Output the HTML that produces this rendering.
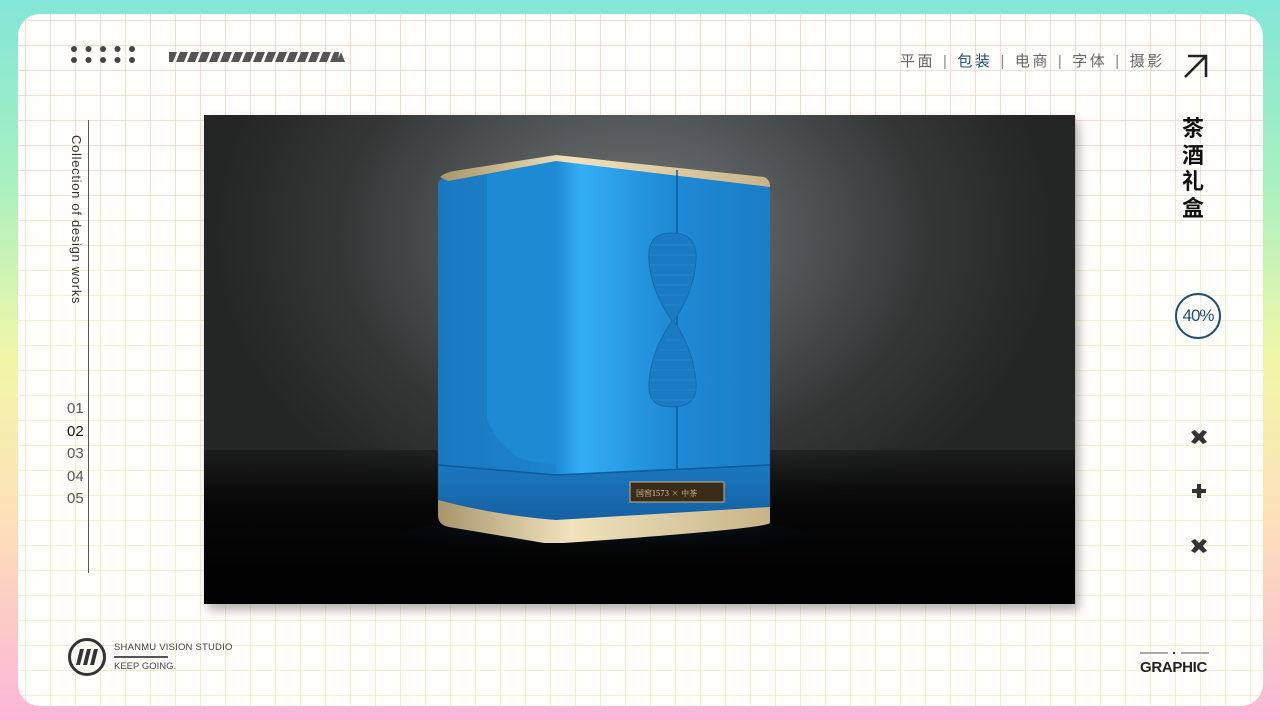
<!DOCTYPE html>
<html><head><meta charset="utf-8"><style>
*{margin:0;padding:0;box-sizing:border-box}
body{width:1280px;height:720px;overflow:hidden;position:relative;font-family:"Liberation Sans","Noto Sans CJK SC",sans-serif;
background:linear-gradient(180deg,#82e6d6 0%,#a8f0c0 25%,#f2f7a8 50%,#fde0b8 72%,#fbb6d8 100%);}
.card{position:absolute;left:18px;top:14px;width:1245px;height:692px;border-radius:22px;background-color:#fffefa;overflow:hidden;
background-image:linear-gradient(90deg,rgba(238,232,195,.7) 1px,transparent 1px),linear-gradient(0deg,rgba(238,232,195,.7) 1px,transparent 1px);
background-size:25px 25px;background-position:7px 7px;}
.card:before{content:"";position:absolute;inset:0;background-image:linear-gradient(90deg,rgba(240,200,210,.45) 1px,transparent 1px),linear-gradient(0deg,rgba(240,200,210,.45) 1px,transparent 1px);background-size:25px 25px;background-position:7px 7px;-webkit-mask:linear-gradient(180deg,#000 0,#000 22%,transparent 36%);mask:linear-gradient(180deg,#000 0,#000 22%,transparent 36%);}
.abs{position:absolute}
.nav{left:900px;top:50px;font-size:15px;color:#666;letter-spacing:2.5px;white-space:nowrap}
.nav b{font-weight:normal;color:#1d4e80}
.nav i{font-style:normal;color:#888;margin:0 8px 0 8px}
.photo{left:204px;top:115px;width:871px;height:489px;overflow:hidden;box-shadow:4px 6px 10px rgba(0,0,0,.3);
background:radial-gradient(ellipse 420px 320px at 430px 120px,#74797a 0%,#55595a 35%,#353737 70%,#242525 100%);}
.floor{position:absolute;left:0;right:0;top:335px;bottom:0;background:linear-gradient(180deg,rgba(20,20,20,.5),#070707 35%,#000)}
</style></head><body>
<div class="card"></div>
<svg class="abs" style="left:70px;top:44px" width="72" height="22">
<g fill="#444"><circle cx="4" cy="5" r="3"/><circle cx="18.5" cy="5" r="3"/><circle cx="33" cy="5" r="3"/><circle cx="47.5" cy="5" r="3"/><circle cx="62" cy="5" r="3"/>
<circle cx="4" cy="16" r="3"/><circle cx="18.5" cy="16" r="3"/><circle cx="33" cy="16" r="3"/><circle cx="47.5" cy="16" r="3"/><circle cx="62" cy="16" r="3"/></g></svg>
<svg class="abs" style="left:169px;top:52px" width="176" height="11">
<g fill="#555"><polygon points="0,0 8,0 4,10 0,10"/>
<polygon points="11,0 19,0 15,10 7,10"/><polygon points="22,0 30,0 26,10 18,10"/><polygon points="33,0 41,0 37,10 29,10"/><polygon points="44,0 52,0 48,10 40,10"/><polygon points="55,0 63,0 59,10 51,10"/><polygon points="66,0 74,0 70,10 62,10"/><polygon points="77,0 85,0 81,10 73,10"/><polygon points="88,0 96,0 92,10 84,10"/><polygon points="99,0 107,0 103,10 95,10"/><polygon points="110,0 118,0 114,10 106,10"/><polygon points="121,0 129,0 125,10 117,10"/><polygon points="132,0 140,0 136,10 128,10"/><polygon points="143,0 151,0 147,10 139,10"/><polygon points="154,0 162,0 158,10 150,10"/><polygon points="165,0 170,0 169,10 161,10"/><polygon points="172,0 176,10 168,10"/></g></svg>
<div class="abs nav">平面<i>|</i><b>包装</b><i>|</i>电商<i>|</i>字体<i>|</i>摄影</div>
<svg class="abs" style="left:1182px;top:52px" width="28" height="28"><path d="M3 25 L24 4 M6 4 H24 V25" stroke="#222" stroke-width="2.6" fill="none"/></svg>
<div class="abs" style="left:1182px;top:116px;width:26px;font-size:22px;line-height:26.5px;font-weight:bold;color:#111">茶酒礼盒</div>
<div class="abs" style="left:1175px;top:293px;width:46px;height:46px;border:2.5px solid #1d4e80;border-radius:50%;font-size:17px;color:#1d4e80;line-height:41px;text-align:center;letter-spacing:-1px">40%</div>
<svg class="abs" style="left:1188px;top:427px" width="22" height="130"><g fill="#333">
<path d="M3 4 L7 2 L11 6 L15 2 L19 4 L15 9 L19 14 L15 16 L11 12 L7 16 L3 14 L7 9Z" transform="translate(0,1)"/>
<path d="M9 57 h4 v5 h5 v4 h-5 v5 h-4 v-5 h-5 v-4 h5Z"/><circle cx="11" cy="64" r="3.5"/>
<path d="M3 4 L7 2 L11 6 L15 2 L19 4 L15 9 L19 14 L15 16 L11 12 L7 16 L3 14 L7 9Z" transform="translate(0,110)"/></g></svg>
<div class="abs" style="left:1140px;top:652px;width:28px;height:2px;background:#aaa"></div>
<div class="abs" style="left:1173px;top:652px;width:2px;height:2px;background:#333"></div>
<div class="abs" style="left:1181px;top:652px;width:28px;height:2px;background:#aaa"></div>
<div class="abs" style="left:1140px;top:659px;font-size:15px;font-weight:bold;color:#222;letter-spacing:-.3px">GRAPHIC</div>
<div class="abs" style="left:88px;top:120px;width:1px;height:453px;background:#555"></div>
<div class="abs" style="left:69px;top:135px;font-size:13px;color:#333;writing-mode:vertical-rl;letter-spacing:.7px">Collection of design works</div>
<div class="abs" style="left:67px;top:398px;font-size:15px;line-height:22.5px;color:#555">01<br><span style="color:#111">02</span><br>03<br>04<br>05</div>
<svg class="abs" style="left:67px;top:637px" width="40" height="40"><circle cx="20" cy="20" r="17.5" stroke="#333" stroke-width="3" fill="none"/>
<g fill="#333"><polygon points="9,28 13,12 17,12 13,28"/><polygon points="16,28 20,12 24,12 20,28"/><polygon points="23,28 27,12 31,12 27,28"/></g></svg>
<div class="abs" style="left:114px;top:642px;font-size:9.5px;color:#444;letter-spacing:.2px">SHANMU VISION STUDIO</div>
<div class="abs" style="left:114px;top:656px;width:54px;height:1.5px;background:#555"></div>
<div class="abs" style="left:114px;top:661px;font-size:9.5px;color:#444">KEEP GOING.</div>
<div class="abs photo">
<div class="floor"></div>
<svg style="position:absolute;left:0;top:0" width="871" height="489">
<defs>
<linearGradient id="fr" x1="0" x2="1"><stop offset="0" stop-color="#1f8ad6"/><stop offset=".12" stop-color="#33aef5"/><stop offset=".5" stop-color="#1f8cd6"/><stop offset="1" stop-color="#1a7dc6"/></linearGradient>
<linearGradient id="sd" x1="0" x2="1"><stop offset="0" stop-color="#1a78c0"/><stop offset="1" stop-color="#1d84cc"/></linearGradient>
<linearGradient id="gd" x1="0" x2="1"><stop offset="0" stop-color="#a8956a"/><stop offset=".4" stop-color="#f0e2bc"/><stop offset="1" stop-color="#c8b488"/></linearGradient>
<linearGradient id="bs" x1="0" x2="0" y1="0" y2="1"><stop offset="0" stop-color="#1b78c0"/><stop offset="1" stop-color="#145e9e"/></linearGradient>
<radialGradient id="ref" cx=".5" cy="0" r=".6"><stop offset="0" stop-color="#0e3350" stop-opacity=".8"/><stop offset="1" stop-color="#000" stop-opacity="0"/></radialGradient>
</defs>
<ellipse cx="400" cy="440" rx="250" ry="40" fill="url(#ref)"/>
<path d="M234 70 Q234 64 242 62 L352 42 L352 420 L242 405 Q234 402 234 395Z" fill="url(#sd)"/>
<path d="M283 60 L352 45 L352 350 L320 345 Q300 335 290 318 L283 305Z" fill="#1e8ad4"/>
<path d="M352 42 L560 65 Q566 68 566 76 L566 395 L352 420Z" fill="url(#fr)"/>
<path d="M236 62 Q240 58 250 56 L352 40 L560 62 Q566 64 566 72 L352 46 L244 66 Z" fill="url(#gd)"/>
<path d="M234 350 Q300 355 352 360 L566 350 L566 392 L352 412 L234 390Z" fill="url(#bs)"/>
<path d="M234 350 L352 360 L566 350" stroke="#0e5a9a" stroke-width="1.5" fill="none"/>
<path d="M234 385 Q290 400 352 405 L566 392 L566 408 Q560 414 360 428 L340 428 L245 412 Q234 410 234 400Z" fill="url(#gd)"/>
<line x1="473" y1="55" x2="473" y2="355" stroke="#0f5c9a" stroke-width="1.5"/>
<g fill="#1a7ac4" stroke="#146aae" stroke-width="1"><path d="M468 118 q-26 0 -23 28 q2 30 23 60 q-21 30 -23 62 q-2 24 23 24 q26 0 24 -24 q-2 -32 -22 -62 q20 -30 22 -60 q2 -28 -24 -28Z"/></g>
<g stroke="#2a8ad0" stroke-width="1" opacity=".7"><line x1="447" y1="130" x2="490" y2="130"/><line x1="446" y1="140" x2="491" y2="140"/><line x1="446" y1="150" x2="491" y2="150"/><line x1="448" y1="160" x2="489" y2="160"/><line x1="452" y1="170" x2="485" y2="170"/><line x1="456" y1="180" x2="481" y2="180"/><line x1="461" y1="190" x2="476" y2="190"/><line x1="462" y1="225" x2="476" y2="225"/><line x1="456" y1="235" x2="482" y2="235"/><line x1="450" y1="245" x2="488" y2="245"/><line x1="447" y1="255" x2="491" y2="255"/><line x1="446" y1="265" x2="492" y2="265"/><line x1="446" y1="275" x2="492" y2="275"/><line x1="447" y1="285" x2="490" y2="285"/></g>
<rect x="426" y="367" width="94" height="20" fill="#3a2c18" stroke="#c8b080" stroke-width="1"/>
<text x="432" y="381" font-size="8" fill="#e8d6a0" font-family="Noto Serif CJK SC,serif">国窖1573 × 中茶</text>
</svg>
</div>
</body></html>
